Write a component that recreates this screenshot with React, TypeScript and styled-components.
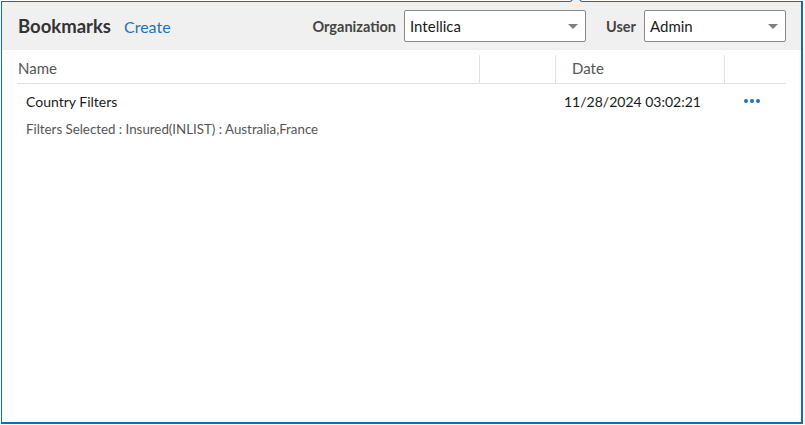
import React from "react";
import styled, { createGlobalStyle } from "styled-components";

const Global = createGlobalStyle`
  html, body { margin: 0; padding: 0; background: #ffffff; }
  body { font-family: Lato, "Open Sans", sans-serif; width: 805px; height: 425px; overflow: hidden; }
  * { box-sizing: border-box; }
`;

const Page = styled.div`
  width: 805px;
  height: 425px;
  padding: 1px;
  background: #ffffff;
`;

const Popup = styled.div`
  position: relative;
  width: 802px;
  height: 423px;
  border: 1px solid #0f6cbd;
  border-right-width: 2px;
  border-bottom-width: 2px;
  background: #ffffff;
  display: flex;
  flex-direction: column;
`;

const Notch = styled.div`
  position: absolute;
  top: -5px;
  left: 570px;
  width: 8px;
  height: 8px;
  background: #f0f0f0;
  border-top: 1px solid #0f6cbd;
  border-left: 1px solid #0f6cbd;
  transform: rotate(45deg);
`;

const Header = styled.div`
  height: 48px;
  background: #f0f0f0;
  display: flex;
  align-items: center;
  padding: 0 15px 0 16px;
`;

const Title = styled.span`
  font-size: 18.5px;
  font-weight: 700;
  color: #333333;
`;

const Link = styled.a`
  margin-left: 13px;
  font-size: 16px;
  color: #1a73c0;
  cursor: pointer;
`;

const Spacer = styled.div`
  flex: 1;
`;

const Label = styled.span<{ $ml?: number }>`
  font-size: 14.5px;
  font-weight: 700;
  color: #444444;
  margin-left: ${(p) => p.$ml ?? 0}px;
  margin-right: 8px;
`;

const Select = styled.div<{ $w: number }>`
  width: ${(p) => p.$w}px;
  height: 32px;
  border: 1px solid #8a8a8a;
  border-radius: 2px;
  background: #ffffff;
  display: flex;
  align-items: center;
  justify-content: space-between;
  padding: 0 7px 0 5px;
  font-size: 15px;
  color: #1a1a1a;
`;

const Caret = styled.span`
  width: 0;
  height: 0;
  border-left: 5px solid transparent;
  border-right: 5px solid transparent;
  border-top: 5px solid #808080;
`;

const Body = styled.div`
  padding: 5px 16px 0 15px;
`;

const Table = styled.div`
  width: 769px;
`;

const Row = styled.div`
  display: grid;
  grid-template-columns: 462px 76px 169px 62px;
`;

const HeadCell = styled.div<{ $line?: boolean }>`
  height: 29px;
  display: flex;
  align-items: center;
  padding-left: ${(p) => (p.$line ? 16 : 1)}px;
  padding-bottom: 2px;
  font-size: 15px;
  color: #555555;
  border-left: ${(p) => (p.$line ? "1px solid #e3e3e3" : "none")};
  border-bottom: 1px solid #e0e0e0;
`;

const Cell = styled.div<{ $pl?: number }>`
  padding-left: ${(p) => p.$pl ?? 0}px;
  padding-top: 9px;
`;

const Name = styled.div`
  font-size: 14px;
  color: #1a1a1a;
  padding-left: 9px;
`;

const Sub = styled.div`
  font-size: 13.3px;
  color: #555555;
  padding-left: 9px;
  margin-top: 11px;
`;

const DateText = styled.div`
  font-size: 14px;
  color: #1a1a1a;
`;

const Dots = styled.div`
  display: flex;
  gap: 2px;
  padding-top: 6px;
  padding-left: 20px;
`;

const Dot = styled.span`
  width: 4px;
  height: 4px;
  border-radius: 50%;
  background: #1a6fc0;
`;

export default function App() {
  return (
    <>
      <Global />
      <Page>
        <Popup>
          <Notch />
          <Header>
            <Title>Bookmarks</Title>
            <Link>Create</Link>
            <Spacer />
            <Label>Organization</Label>
            <Select $w={182}>
              Intellica
              <Caret />
            </Select>
            <Label $ml={20}>User</Label>
            <Select $w={142}>
              Admin
              <Caret />
            </Select>
          </Header>
          <Body>
            <Table>
              <Row>
                <HeadCell>Name</HeadCell>
                <HeadCell $line />
                <HeadCell $line>Date</HeadCell>
                <HeadCell $line />
              </Row>
              <Row>
                <Cell>
                  <Name>Country Filters</Name>
                  <Sub>Filters Selected : Insured(INLIST) : Australia,France</Sub>
                </Cell>
                <Cell />
                <Cell $pl={9}>
                  <DateText>11/28/2024 03:02:21</DateText>
                </Cell>
                <Cell>
                  <Dots>
                    <Dot />
                    <Dot />
                    <Dot />
                  </Dots>
                </Cell>
              </Row>
            </Table>
          </Body>
        </Popup>
      </Page>
    </>
  );
}
